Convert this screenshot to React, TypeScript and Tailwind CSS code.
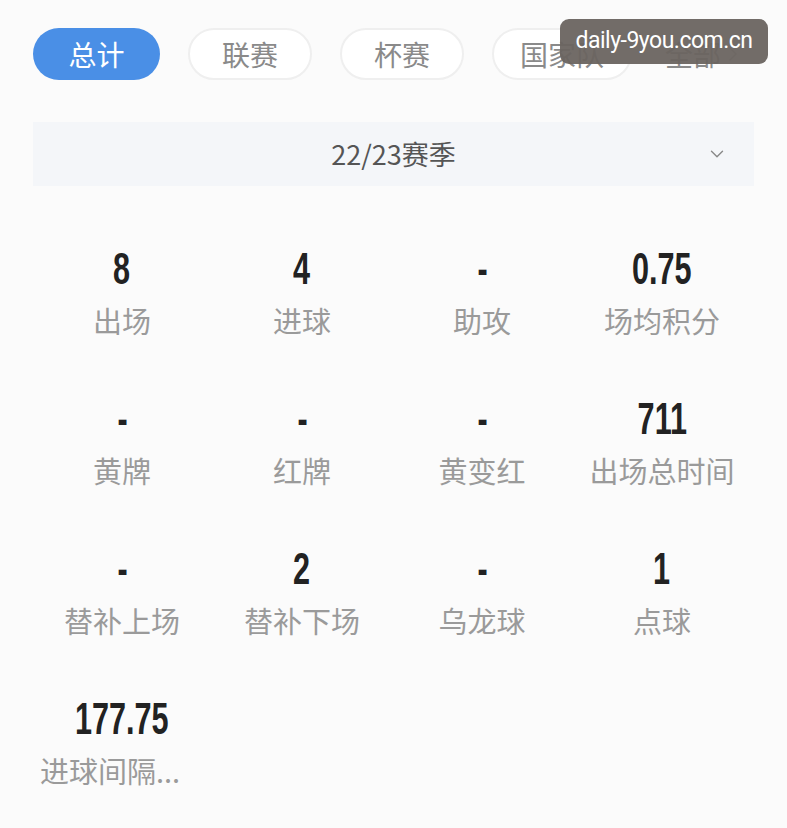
import { ChevronDown, ChevronRight } from "lucide-react";

const tabs = [
  { name: "总计", w: "w-[127px]" },
  { name: "联赛", w: "w-[124px]" },
  { name: "杯赛", w: "w-[124px]" },
  { name: "国家队", w: "w-[140px]" },
];

const stats = [
  { value: "8", label: "出场" },
  { value: "4", label: "进球" },
  { value: "-", label: "助攻" },
  { value: "0.75", label: "场均积分" },
  { value: "-", label: "黄牌" },
  { value: "-", label: "红牌" },
  { value: "-", label: "黄变红" },
  { value: "711", label: "出场总时间" },
  { value: "-", label: "替补上场" },
  { value: "2", label: "替补下场" },
  { value: "-", label: "乌龙球" },
  { value: "1", label: "点球" },
  { value: "177.75", label: "进球间隔..." },
];

const cjk = { fontFamily: '"Noto Sans CJK SC", "Noto Sans", sans-serif' };
const num = { fontFamily: '"Liberation Sans", Arial, sans-serif' };

export default function App() {
  return (
    <div className="relative w-[787px] h-[828px] bg-[#fbfbfb] overflow-hidden" style={cjk}>
      {/* tabs */}
      <div className="flex items-center pl-[33px] pt-[28px] whitespace-nowrap">
        {tabs.map((t, i) => (
          <div
            key={t.name}
            className={
              t.w +
              (i === 0
                ? " h-[52px] shrink-0 rounded-full bg-[#4a8fe6] text-white text-[28px] flex items-center justify-center"
                : " h-[52px] shrink-0 ml-[28px] rounded-full border-2 border-[#efefef] bg-white text-[#8a8a8a] text-[28px] flex items-center justify-center")
            }
          >
            {t.name}
          </div>
        ))}
        <div className="flex items-center shrink-0 text-[28px] text-[#8a8a8a] ml-[33px]">
          全部
          <ChevronRight className="w-[24px] h-[24px] text-[#aaa]" strokeWidth={1.5} />
        </div>
      </div>

      {/* season picker */}
      <div className="mx-[33px] mt-[42px] h-[64px] bg-[#f4f6f9] relative flex items-center justify-center">
        <span className="text-[27px] text-[#555]">22/23赛季</span>
        <ChevronDown className="absolute right-[26px] w-[22px] h-[22px] text-[#888]" strokeWidth={1.5} />
      </div>

      {/* stats */}
      <div className="grid grid-cols-4 mx-[32px] mt-[58px] w-[720px] gap-y-[54px]">
        {stats.map((s, i) => (
          <div key={i} className="flex flex-col items-center">
            <div
              className="text-[45px] font-bold text-[#222] leading-[50px] scale-x-[0.68] whitespace-nowrap"
              style={num}
            >
              {s.value}
            </div>
            <div
              className={
                "text-[29px] text-[#9a9a9a] leading-[40px] mt-[6px] whitespace-nowrap" +
                (s.label === "进球间隔..." ? " self-start ml-[8px]" : "")
              }
            >
              {s.label}
            </div>
          </div>
        ))}
      </div>

      {/* watermark */}
      <div
        className="absolute left-[560px] top-[19px] w-[208px] h-[45px] rounded-[9px] bg-[#6a6460]/95 flex items-center justify-center text-white text-[23px] tracking-[-0.5px]"
        style={{ fontFamily: '"Roboto", "Noto Sans", sans-serif' }}
      >
        daily-9you.com.cn
      </div>
    </div>
  );
}
